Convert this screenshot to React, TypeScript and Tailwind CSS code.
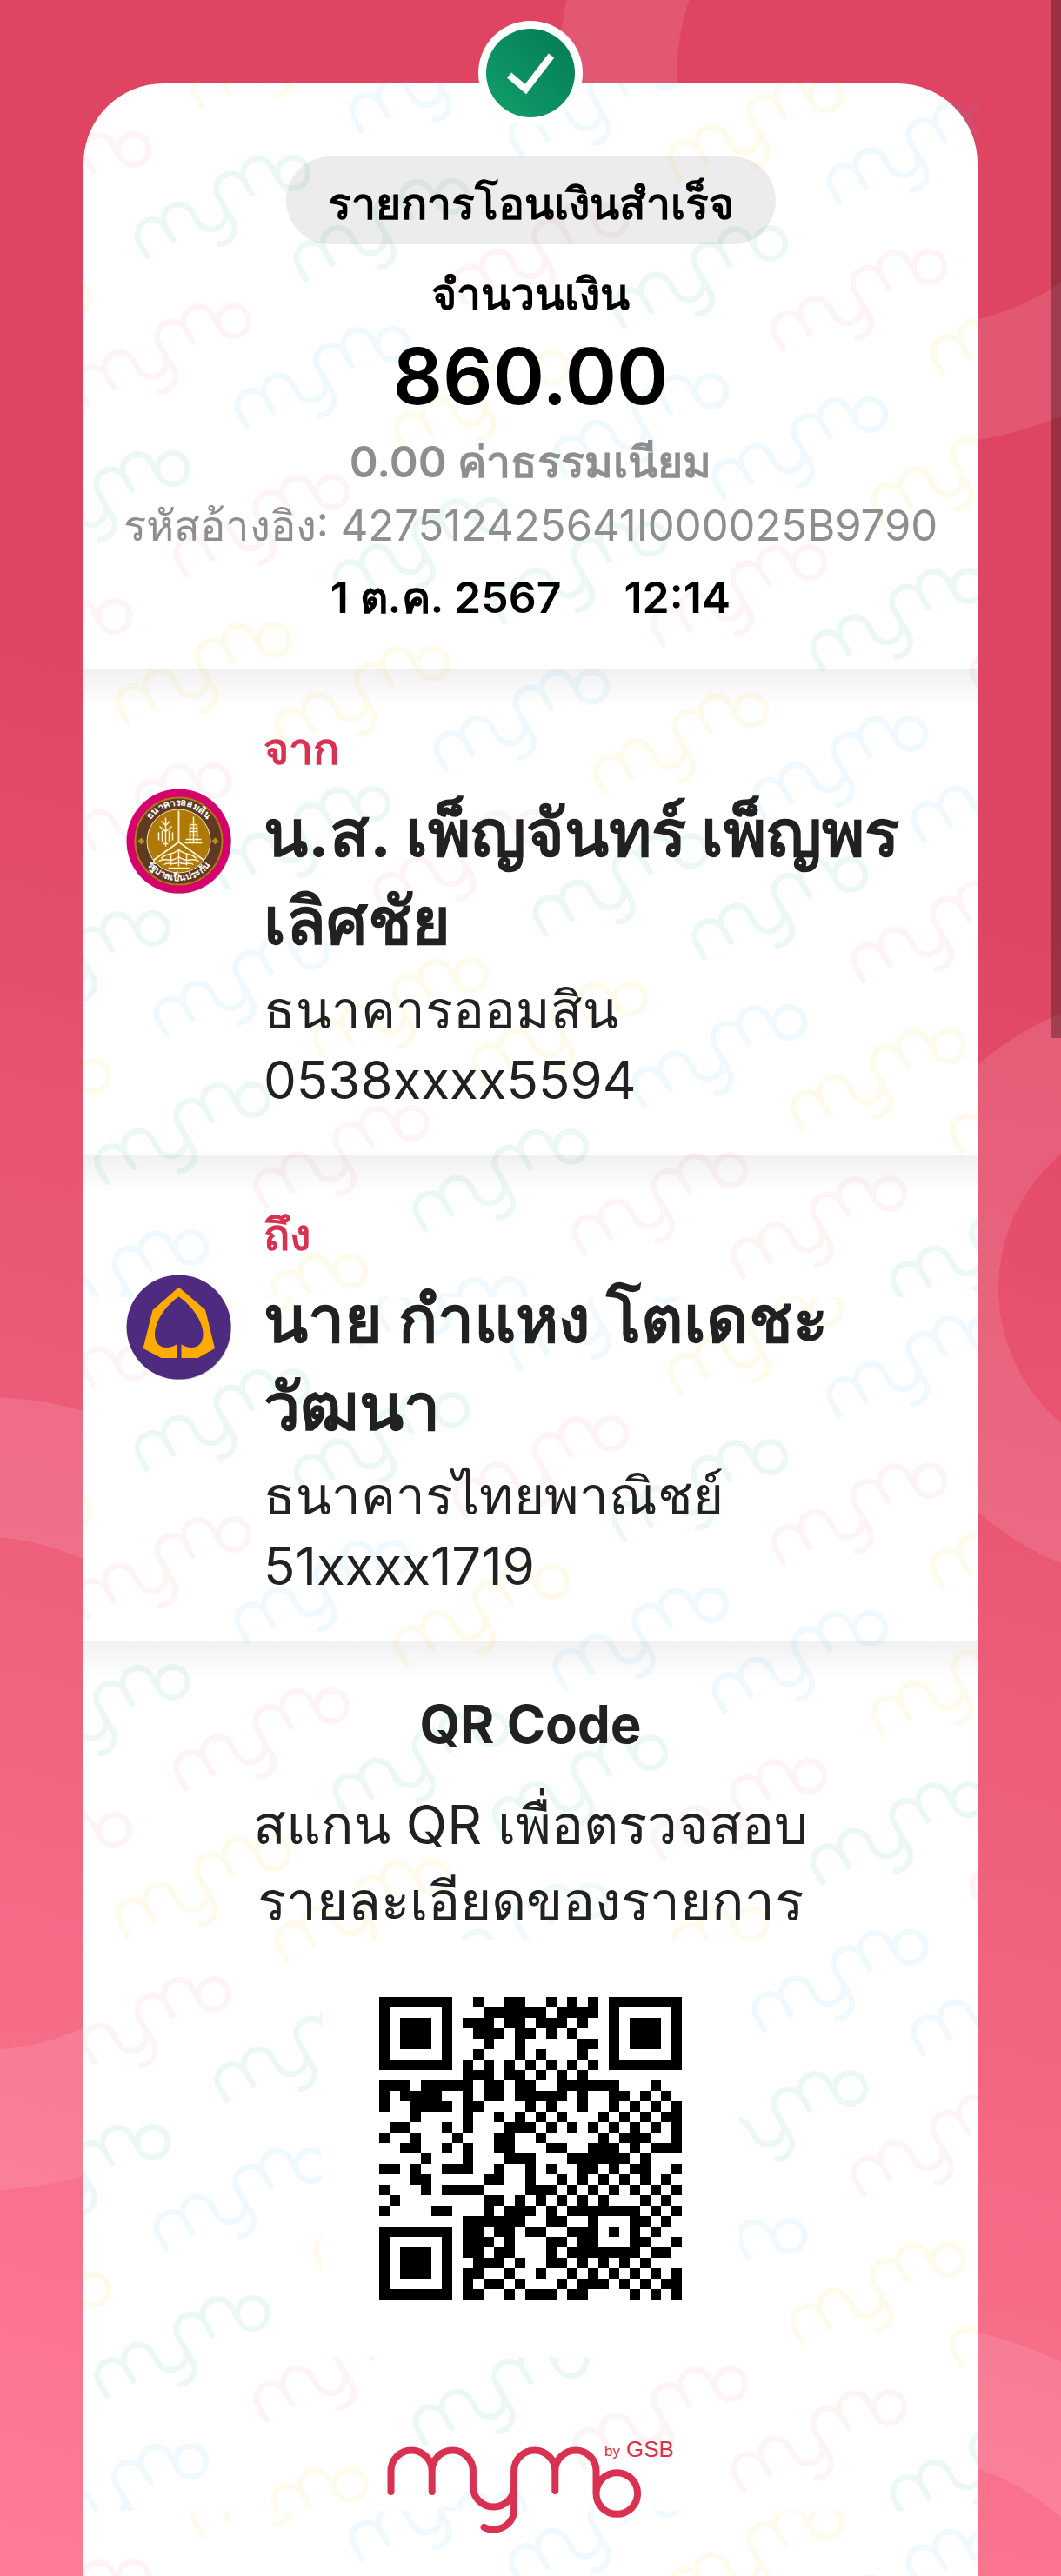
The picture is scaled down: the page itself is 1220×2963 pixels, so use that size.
type Party = {
  label: string;
  name: string;
  bank: string;
  account: string;
  logo: React.ReactNode;
};

const LOGO_PATH =
  "M29.5 107V83a23.6 23.6 0 0 1 47.2 0V107M76.7 83a23.6 23.6 0 0 1 47.2 0V101a23.6 23.6 0 0 0 47.2 0" +
  "M171.1 128V83a23.6 23.6 0 0 1 47.2 0V106M218.3 83a23.6 23.6 0 0 1 47.2 0V109" +
  "a23.8 23.8 0 1 0 47.6 0a23.8 23.8 0 1 0 -47.6 0M171.1 128c0 13-11 22.5-24 22.5q-6 0-10.5-2.5";

const TINTS: Record<string, string> = {
  p: "#e0304f",
  g: "#00a07c",
  y: "#ffcc00",
  b: "#30a8ee",
};

// each row: x and y of its first mark, then one letter per mark
const ROWS: [number, number, string][] = [
  [137, 28, "ybbyb"],
  [-110, 171, "pggpgpy"],
  [-178, 341, "ypbybby"],
  [-65, 538, "gpggpgp"],
  [-132, 708, "pyybybb"],
  [-18, 897, "pgpggp"],
  [-88, 1067, "gbyybyy"],
  [-156, 1237, "ygpgppg"],
  [-44, 1434, "byb"],
];

const QR_ROWS = [
  "0-6 9 12-13 16 18 20 22-28",
  "0 6 10-15 17-20 22 28",
  "0 2-4 6 8-10 12-13 15-17 19 22 24-26 28",
  "0 2-4 6 9-11 13-14 16 18 22 24-26 28",
  "0 2-4 6 10 13 19-20 22 24-26 28",
  "0 6 9 13 15 19 22 28",
  "0-6 8 10 12 14 16 18 20 22-28",
  "8-10 12-13 15 17 19",
  "0-2 4-8 10-11 13-14 17-22 26",
  "0 2-5 8 10-11 13-17 19 22-23 25 27",
  "0 3-6 8-9 14 16 19 22 24 26 28",
  "3 8 11 13 15 17 21 23 25 27-28",
  "1-2 6 8 12-14 16 18 20 22 24 26 28",
  "0 3 7 11-12 15 21 23-25 28",
  "2-3 6 8 11-12 16-17 20-22 24 26-28",
  "4 8 12-14 18-23 25",
  "0-1 3 6-8 11 14 16 19-20 22 24-25 28",
  "3-4 10-11 14 17 19 21 23 25 27",
  "0 4 6-9 14-16 18 20 22 24 26 28",
  "1 10-11 13 15 17 19 21 25 27",
  "0 5-6 10 12-14 16 18-24 26 28",
  "8-13 16-17 20 24-25 27",
  "0-6 8-9 11-12 14-15 18-20 22 24 26",
  "0 6 8-10 12 16-17 19-20 24-25 28",
  "0 2-4 6 8-9 11-12 16 18-24 26-27",
  "0 2-4 6 9-11 13 16-17 19 21 23 25",
  "0 2-4 6 8-9 12 15 18 20 22 24 26 28",
  "0 6 8 10-11 13 17 19-21 23 25 27-28",
  "0-6 8-9 12 14-16 18-19 24 26 28",
];

function Rings() {
  return (
    <svg
      className="absolute inset-0 h-full w-full"
      viewBox="0 0 1220 2963"
      preserveAspectRatio="xMidYMin slice"
      fill="none"
      stroke="#fff"
      strokeOpacity="0.11"
      aria-hidden="true"
    >
      <ellipse cx="1060" cy="90" rx="350" ry="353" strokeWidth="136" />
      <circle cx="1350" cy="1482" r="272" strokeWidth="140" />
      <circle cx="-25" cy="2063" r="376" strokeWidth="161" />
      <circle cx="1022" cy="3121" r="375" strokeWidth="150" />
    </svg>
  );
}

function Watermark() {
  return (
    <svg className="absolute inset-0 h-full w-full" aria-hidden="true">
      <defs>
        <pattern id="marks" width="1028" height="1396" patternUnits="userSpaceOnUse">
          {ROWS.map(([x, y, tints]) =>
            tints.split("").map((t, i) => (
              <path
                key={`${y}-${i}`}
                d={LOGO_PATH}
                transform={`translate(${x + i * 183} ${y + i * 27}) rotate(-30) scale(0.741) translate(-29.5 -107)`}
                fill="none"
                stroke={TINTS[t]}
                strokeOpacity={t === "p" ? 0.055 : 0.075}
                strokeWidth="9"
                strokeLinecap="round"
              />
            ))
          )}
        </pattern>
      </defs>
      <rect width="100%" height="100%" fill="url(#marks)" />
    </svg>
  );
}

function SuccessBadge() {
  return (
    <svg className="absolute -top-[72px] left-1/2 size-[120px] -translate-x-1/2" viewBox="0 0 120 120" role="img" aria-label="สำเร็จ">
      <defs>
        <linearGradient id="ok" x1="0" y1="1" x2="1" y2="0">
          <stop offset="0" stopColor="#13a06c" />
          <stop offset="1" stopColor="#047a53" />
        </linearGradient>
      </defs>
      <circle cx="60" cy="60" r="60" fill="#fff" />
      <circle cx="60" cy="60" r="51" fill="url(#ok)" />
      <path d="M35.5 62.5L54.5 78.5L84 40" fill="none" stroke="#fff" strokeWidth="8" />
    </svg>
  );
}

function GsbLogo() {
  return (
    <svg className="size-[121px] shrink-0" viewBox="14.5 16.5 121 121" role="img" aria-label="ธนาคารออมสิน">
      <defs>
        <path id="sealTop" d="M35 76a40 40 0 0 1 80 0" />
        <path id="sealBottom" d="M28.5 76a46.5 46.5 0 0 0 93 0" />
      </defs>
      <circle cx="75.5" cy="77.5" r="60" fill="#bbb" />
      <circle cx="75" cy="77" r="60" fill="#d6006d" />
      <circle cx="75" cy="77" r="50" fill="#5f3a22" stroke="#b07d0a" strokeWidth="2" />
      <circle cx="75" cy="77" r="36.5" fill="#ad7a05" stroke="#f3e6bd" strokeWidth="1" />
      <path d="M75 42V78L46 99M75 78L104 99" fill="none" stroke="#f7edcf" strokeWidth="2" />
      <g fill="none" stroke="#fff6da" strokeWidth="1.5">
        <path d="M60 50v33M55 54l5 5 5-5M53 60l7 6 7-6M52 67v9M56 65v13M64 65v13M68 67v9M57 80h6" />
        <path d="M92 49v8M89 58h6M88 62h8M87 66h10M86 70h12M83 75h18M82 79h20M88 58v20M96 58v20M92 58v20" />
        <path d="M55 97c5-7 12-3 20-10 8 7 15 3 20 10M52 100c8-5 14 3 23-5 9 8 15 0 23 5M58 104c6-4 11 2 17-3 6 5 11-1 17 3M75 86v20M66 92v13M84 92v13M63 108h24" />
      </g>
      <path d="M32 73l4 4-4 4-4-4zM117 73l4 4-4 4-4-4z" fill="#c08a1c" />
      <g fill="#fff" fontFamily="Inter, sans-serif" fontSize="11" fontWeight="700" textAnchor="middle">
        <text>
          <textPath href="#sealTop" startOffset="50%">ธนาคารออมสิน</textPath>
        </text>
        <text>
          <textPath href="#sealBottom" startOffset="50%">รัฐบาลเป็นประกัน</textPath>
        </text>
      </g>
    </svg>
  );
}

function ScbLogo() {
  return (
    <svg className="size-[121px] shrink-0" viewBox="14.5 15.5 121 121" role="img" aria-label="ธนาคารไทยพาณิชย์">
      <circle cx="75.7" cy="76.7" r="60" fill="#c4c0c8" />
      <circle cx="75" cy="76" r="60" fill="#4f2b7f" />
      <path
        d="M75 30L105.5 56L116.5 100.5L97 111.5H78V96C86 101 103 103 103 84C103 69 89 50 75 41C61 50 47.5 69 47.5 84C47.5 103 65 101 72.5 96V111.5H55L34 100.5L45 56.5Z"
        fill="#ffab00"
      />
    </svg>
  );
}

function QrCode() {
  return (
    <svg className="mx-auto size-[480px] bg-white" viewBox="0 0 480 480" shapeRendering="crispEdges" role="img" aria-label="QR Code">
      {QR_ROWS.map((row, y) =>
        row.split(" ").map((run) => {
          const [from, to = from] = run.split("-").map(Number);
          return <rect key={`${y}-${from}`} x={66 + from * 12} y={66 + y * 12} width={(to - from + 1) * 12} height="12" />;
        })
      )}
    </svg>
  );
}

function MymoLogo() {
  return (
    <svg className="mx-auto mt-[88px] w-[380px]" viewBox="0 40 380 123" role="img" aria-label="mymo by GSB">
      <path d={LOGO_PATH} fill="none" stroke="#d93152" strokeWidth="8" strokeLinecap="round" />
      <g fill="#d93152" fontFamily="'Liberation Sans', Arial, sans-serif">
        <text x="275" y="66" fontSize="17">by</text>
        <text x="300" y="67" fontSize="26">GSB</text>
      </g>
    </svg>
  );
}

function PartySection({ label, name, bank, account, logo }: Party) {
  return (
    <section className="bg-[linear-gradient(rgba(0,0,0,0.06),transparent_44px)] px-[49px] pt-14 pb-[45px] text-[#212121]">
      <h2 className="ml-[158px] text-[50px] leading-[72px] font-bold text-[#d93152]">{label}</h2>
      <div className="mt-[10px] flex items-start gap-[37px]">
        {logo}
        <div>
          <p className="text-[75px] leading-[101px] font-bold">{name}</p>
          <p className="mt-3 text-[60px] leading-[81px]">{bank}</p>
          <p className="text-[60px] leading-[81px]">{account}</p>
        </div>
      </div>
    </section>
  );
}

export default function App() {
  return (
    <div className="relative flex min-h-screen flex-col overflow-hidden bg-[linear-gradient(196deg,#df4462_30%,#ff7c96_100%)] px-24 pt-24 font-[Inter,sans-serif]">
      <Rings />

      <main className="relative grow rounded-t-[92px] bg-white">
        <Watermark />
        <SuccessBadge />

        <div className="relative">
          <section className="flex flex-col items-center pt-[84px] pb-[46px] text-center text-black">
            <h1 className="rounded-full bg-black/[0.075] px-12 pt-2 text-[50px] leading-[93px] font-semibold">
              รายการโอนเงินสำเร็จ
            </h1>
            <p className="mt-4 text-[50px] leading-[82px] font-semibold">จำนวนเงิน</p>
            <p className="text-[90px] leading-[108px] font-semibold">860.00</p>
            <p className="mt-2 text-[50px] leading-[72px] font-semibold text-[#8e8e8e]">0.00 ค่าธรรมเนียม</p>
            <p className="text-[49px] leading-[76px] whitespace-nowrap text-[#8e8e8e]">
              รหัสอ้างอิง: 427512425641I000025B9790
            </p>
            <p className="mt-2 flex gap-[72px] text-[50px] leading-[72px] font-semibold">
              <span>1 ต.ค. 2567</span>
              <span>12:14</span>
            </p>
          </section>

          <PartySection
            label="จาก"
            name="น.ส. เพ็ญจันทร์ เพ็ญพร เลิศชัย"
            bank="ธนาคารออมสิน"
            account="0538xxxx5594"
            logo={<GsbLogo />}
          />
          <PartySection
            label="ถึง"
            name="นาย กำแหง โตเดชะวัฒนา"
            bank="ธนาคารไทยพาณิชย์"
            account="51xxxx1719"
            logo={<ScbLogo />}
          />

          <section className="bg-[linear-gradient(rgba(0,0,0,0.06),transparent_44px)] pt-14 pb-10 text-center text-[#212121]">
            <h2 className="text-[60px] leading-[80px] font-bold">QR Code</h2>
            <p className="mt-8 text-[62px] leading-[88px]">
              สแกน QR เพื่อตรวจสอบ
              <br />
              รายละเอียดของรายการ
            </p>
            <QrCode />
            <MymoLogo />
          </section>
        </div>
      </main>

      {/* scroll thumb */}
      <div className="absolute top-0 right-0 h-[1194px] w-3 bg-black/30" />
    </div>
  );
}
